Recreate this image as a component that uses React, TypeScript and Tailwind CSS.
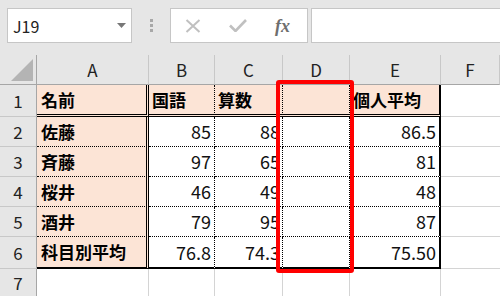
import React from "react";

const font = { fontFamily: '"Noto Sans CJK JP", "Noto Sans", sans-serif' };

const cols = ["A", "B", "C", "D", "E", "F"];

type Row = { label: string; b: string; c: string; d: string; e: string };

const rows: Row[] = [
  { label: "名前", b: "国語", c: "算数", d: "", e: "個人平均" },
  { label: "佐藤", b: "85", c: "88", d: "", e: "86.5" },
  { label: "斉藤", b: "97", c: "65", d: "", e: "81" },
  { label: "桜井", b: "46", c: "49", d: "", e: "48" },
  { label: "酒井", b: "79", c: "95", d: "", e: "87" },
  { label: "科目別平均", b: "76.8", c: "74.3", d: "", e: "75.50" },
];

// bottom border per data row (1..6)
function bottomCls(r: number) {
  if (r === 0) return "border-b-[3px] [border-bottom-style:double] border-b-black";
  if (r === 5) return "border-b-2 border-b-black";
  return "border-b [border-bottom-style:dotted] border-b-black";
}

function FormulaBar() {
  return (
    <div className="h-[55px] bg-[#e6e6e6] flex items-start pt-2">
      {/* Name box */}
      <div className="ml-[7px] w-[125px] h-[35px] bg-white border border-[#c6c6c6] flex items-center justify-between pl-[5px] pr-[5px]">
        <span className="text-[16px] text-[#222]">J19</span>
        <svg width="9" height="5" viewBox="0 0 9 5">
          <path d="M0 0 L9 0 L4.5 5 Z" fill="#777" />
        </svg>
      </div>
      {/* drag dots */}
      <div className="ml-[18px] mt-[11px] flex flex-col gap-[2px]">
        <span className="block w-[3px] h-[3px] bg-[#a8a8a8]" />
        <span className="block w-[3px] h-[3px] bg-[#a8a8a8]" />
        <span className="block w-[3px] h-[3px] bg-[#a8a8a8]" />
      </div>
      {/* cancel / enter / fx */}
      <div className="ml-[17px] w-[138px] h-[35px] bg-white border border-[#c6c6c6] flex items-center">
        <svg className="ml-[14px]" width="16" height="14" viewBox="0 0 16 14">
          <path d="M1.5 1 L14.5 13 M14.5 1 L1.5 13" stroke="#c0c0c0" strokeWidth="2" />
        </svg>
        <svg className="ml-[28px]" width="18" height="13" viewBox="0 0 18 13">
          <path d="M1 6.5 L6.5 12 L17 1" stroke="#c0c0c0" strokeWidth="2.6" fill="none" />
        </svg>
        <span
          className="ml-[28px] text-[18px] italic font-bold text-[#6e6e6e] leading-none"
          style={{ fontFamily: '"Liberation Serif", serif' }}
        >
          fx
        </span>
      </div>
      <div className="ml-[3px] flex-1 h-[35px] bg-white border border-r-0 border-[#c6c6c6]" />
    </div>
  );
}

export default function App() {
  return (
    <div className="w-[500px] h-[296px] overflow-hidden relative bg-white" style={font}>
      <FormulaBar />
      <div className="grid grid-cols-[37px_112px_66px_68px_67px_91px_1fr] grid-rows-[30px_32px_30px_30px_30px_30px_32px_1fr] h-[241px]">
        {/* header row */}
        <div className="bg-[#e6e6e6] border-r border-b border-[#a6a6a6] flex items-end justify-end pr-[3px] pb-[3px]">
          <svg width="22" height="22" viewBox="0 0 22 22">
            <path d="M22 0 L22 22 L0 22 Z" fill="#b4b4b4" />
          </svg>
        </div>
        {cols.map((c) => (
          <div
            key={c}
            className="bg-[#e6e6e6] border-r border-r-[#c8c8c8] border-b border-b-[#a6a6a6] flex items-center justify-center text-[17px] text-[#222] pt-[1px]"
          >
            {c}
          </div>
        ))}

        {rows.map((r, i) => (
          <React.Fragment key={i}>
            <div className="bg-[#e6e6e6] border-r border-r-[#a6a6a6] border-b border-b-[#c8c8c8] flex items-center justify-center text-[17px] text-[#222]">
              {i + 1}
            </div>
            <div
              className={`bg-[#fce4d6] ${bottomCls(i)} border-r-[3px] [border-right-style:double] border-r-black flex items-center pl-[4px] text-[17px] font-bold text-black whitespace-nowrap`}
            >
              {r.label}
            </div>
            {i === 0 ? (
              <>
                <div className={`bg-[#fce4d6] ${bottomCls(i)} border-r [border-right-style:dotted] border-r-black flex items-center pl-[3px] text-[17px] font-bold text-black`}>
                  {r.b}
                </div>
                <div className={`bg-[#fce4d6] ${bottomCls(i)} border-r [border-right-style:dotted] border-r-black flex items-center pl-[3px] text-[17px] font-bold text-black whitespace-nowrap`}>
                  {r.c}
                </div>
                <div className={`bg-[#fce4d6] ${bottomCls(i)} border-r [border-right-style:dotted] border-r-black`} />
                <div className={`bg-[#fce4d6] ${bottomCls(i)} border-r-2 border-r-black flex items-center pl-[3px] text-[17px] font-bold text-black whitespace-nowrap`}>
                  {r.e}
                </div>
              </>
            ) : (
              <>
                <div className={`${bottomCls(i)} border-r [border-right-style:dotted] border-r-black flex items-center justify-end pr-[3px] text-[18px] text-[#111]`}>
                  {r.b}
                </div>
                <div className={`${bottomCls(i)} border-r [border-right-style:dotted] border-r-black flex items-center justify-end pr-[2px] text-[18px] text-[#111]`}>
                  {r.c}
                </div>
                <div className={`${bottomCls(i)} border-r [border-right-style:dotted] border-r-black`} />
                <div className={`${bottomCls(i)} border-r-2 border-r-black flex items-center justify-end pr-[3px] text-[18px] text-[#111]`}>
                  {r.e}
                </div>
              </>
            )}
            <div className="border-b border-b-[#d4d4d4]" />
          </React.Fragment>
        ))}

        {/* row 7 */}
        <div className="bg-[#e6e6e6] border-r border-r-[#a6a6a6] flex items-center justify-center text-[17px] text-[#222]">
          7
        </div>
        <div className="border-r border-r-[#d4d4d4]" />
        <div className="border-r border-r-[#d4d4d4]" />
        <div className="border-r border-r-[#d4d4d4]" />
        <div className="border-r border-r-[#d4d4d4]" />
        <div className="border-r border-r-[#d4d4d4]" />
        <div />
      </div>

      {/* red highlight over column D */}
      <div className="absolute left-[276px] top-[80px] w-[78px] h-[193px] border-4 border-[#ff0000] rounded-[3px] pointer-events-none" />
    </div>
  );
}
